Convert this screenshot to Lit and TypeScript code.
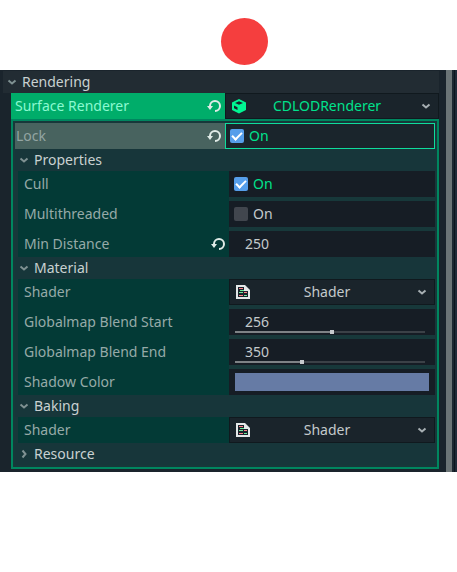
import { LitElement, html, css, svg, nothing, TemplateResult } from "lit";
import { customElement, state } from "lit/decorators.js";

const chevron = svg`<path d="M4.5 6.5 8 9.5l3.5-3" fill="none" stroke="currentColor" stroke-width="2"/>`;

const revertIcon = html`<svg viewBox="0 0 16 16" aria-hidden="true">
  <path fill="currentColor" d="M9 2a6 6 0 0 0-6 6H1l3 4 3-4H5a4 4 0 1 1 4 4v2A6 6 0 0 0 9 2z"/>
</svg>`;

const cubeIcon = html`<svg class="kind" viewBox="0 0 16 16" aria-hidden="true">
  <path fill="#00f693" d="M8 1 15 4.500v7.500L8 15.500 1 12V4.500z"/>
  <path fill="#18232b" d="M8 3.200 12 5 8 6.800 4 5zM3 7.500l3.500 1.700v2.800L3 10.300z"/>
</svg>`;

const shaderIcon = html`<svg class="kind" viewBox="0 0 16 16" aria-hidden="true">
  <path fill="#e4e8e9" d="M1 1h9l5 5v9H1z"/>
  <path fill="#18232b" d="M3 3h6v4h4v6H3z"/>
  <path stroke="#ff7f86" d="M4 4.500h4M9 8.500h3M4 11.500h4"/>
  <path stroke="#6fe89b" d="M5 6.500h4M4 8.500h4M9 11.500h3"/>
</svg>`;

@customElement("app-root")
export class AppRoot extends LitElement {
  static styles = css`
    :host {
      display: block;
      font: 14px/20px "Noto Sans", sans-serif;
      color: #c4cacc;
    }
    *, ::after { box-sizing: border-box; }
    .intro {
      display: flex;
      justify-content: center;
      align-items: flex-end;
      height: 70px;
      padding: 0 0 5px 32px;
      background: #fff;
    }
    .dot {
      width: 47px;
      height: 47px;
      border-radius: 50%;
      background: #f53e3e;
    }
    .inspector {
      display: flex;
      background: #1a242c;
    }
    .content {
      flex: 1;
      min-width: 0;
      padding: 1px 7px 3px 3px;
    }
    .scroll {
      width: 11px;
      border-left: 6px solid #6b7476;
      background: linear-gradient(90deg, #1d2831 2px, #0c151d 2px 3px, #202b38 3px);
    }
    .head {
      display: flex;
      align-items: center;
      width: 100%;
      height: 22px;
      margin: 0;
      padding: 0 3px 0 1px;
      border: 0;
      gap: 2px;
      background: #17363a;
      color: #c9d1d1;
      font: inherit;
      text-align: left;
    }
    .top { background: #222c33; }
    .head svg { width: 16px; height: 16px; color: #7f9192; }
    .head svg.closed { transform: rotate(-90deg); }
    .main { padding-left: 8px; }
    .row {
      display: grid;
      grid-template-columns: 1fr 1fr;
      height: 26px;
    }
    .name {
      display: flex;
      align-items: center;
      justify-content: space-between;
      min-width: 0;
      padding: 0 3px 0 1px;
      color: #96aaa8;
      white-space: nowrap;
    }
    .name button {
      display: flex;
      padding: 0;
      border: 0;
      background: none;
      color: #e0ebe7;
    }
    .name button svg { width: 16px; height: 16px; }
    .picked .name { padding-left: 4px; background: #00ad6a; color: #8bf9d0; }
    .hover .name { background: #48635f; color: #93a5a2; }
    .box {
      padding: 2px;
      border: 2px solid #00865f;
      background: #17383a;
    }
    .group {
      display: grid;
      gap: 4px;
      padding-left: 8px;
      background: linear-gradient(90deg, #17383a 3px, #033a36 3px calc(50% + 4px), #17383a 0);
    }
    .value {
      position: relative;
      display: flex;
      align-items: center;
      min-width: 0;
      background: #161d25;
    }
    .hover .value { border: 1px solid #0fdc9c; background: #1a252c; }
    .check {
      display: flex;
      align-items: center;
      gap: 5px;
      flex: 1;
      padding-left: 5px;
    }
    .hover .check { padding-left: 4px; }
    .check input {
      appearance: none;
      display: grid;
      width: 14px;
      height: 14px;
      margin: 0;
      border-radius: 2px;
      background: #41464e;
    }
    .check input:checked { background: #569eea; }
    .check input:checked::after {
      content: "";
      width: 10px;
      height: 6px;
      margin: 3px 0 0 2px;
      border: solid #fff;
      border-width: 0 0 2px 2px;
      transform: rotate(-45deg);
    }
    .check.on { color: #00e28c; }
    .drop { border: 1px solid #10191e; background: #1a242b; }
    .drop svg { position: absolute; width: 16px; height: 16px; top: 4px; pointer-events: none; }
    .drop .kind { left: 5px; }
    .drop .arrow { right: 4px; color: #a7afb3; }
    select {
      appearance: none;
      width: 100%;
      height: 24px;
      padding: 0 30px 0 20px;
      border: 0;
      background: none;
      color: inherit;
      font: inherit;
      text-align: center;
      text-align-last: center;
    }
    .picked .drop { color: #00e28c; }
    .num {
      width: 100%;
      height: 26px;
      padding: 0 16px 2px;
      border: 0;
      background: none;
      color: inherit;
      font: inherit;
    }
    .range {
      position: absolute;
      left: 6px;
      right: 10px;
      bottom: 1px;
      display: flex;
    }
    .range input {
      appearance: none;
      width: 100%;
      height: 4px;
      margin: 0;
      background: linear-gradient(90deg, #7d8286 var(--fill), #3b4147 0) center / 100% 2px no-repeat;
    }
    .range input::-webkit-slider-thumb {
      appearance: none;
      width: 4px;
      height: 4px;
      background: #c6cacd;
    }
    .color {
      appearance: none;
      width: 100%;
      height: 18px;
      margin: 0 6px;
      padding: 0;
      border: 0;
      background: none;
    }
    .color::-webkit-color-swatch-wrapper { padding: 0; }
    .color::-webkit-color-swatch { border: 0; border-radius: 0; }
    :focus { outline: none; }
  `;

  @state() private closed = new Set<string>(["Resource"]);
  @state() private flags: Record<string, boolean> = { lock: true, cull: true, threads: false };
  @state() private nums: Record<string, number> = { distance: 250, start: 256, end: 350 };

  private toggle(name: string) {
    const next = new Set(this.closed);
    if (!next.delete(name)) next.add(name);
    this.closed = next;
  }

  private head(name: string, cls = "") {
    const closed = this.closed.has(name);
    return html`<button class="head ${cls}" aria-expanded=${!closed} @click=${() => this.toggle(name)}>
      <svg class=${closed ? "closed" : ""} viewBox="0 0 16 16" aria-hidden="true">${chevron}</svg>${name}
    </button>`;
  }

  private section(name: string, rows: TemplateResult[]) {
    return html`${this.head(name)}${this.closed.has(name) ? nothing : html`<div class="group">${rows}</div>`}`;
  }

  private row(id: string, name: string, value: TemplateResult, cls = "", revert = false) {
    return html`<div class="row ${cls}">
      <div class="name">
        <label for=${id}>${name}</label>
        ${revert ? html`<button aria-label="Revert ${name}">${revertIcon}</button>` : nothing}
      </div>
      ${value}
    </div>`;
  }

  private check(id: string) {
    const on = this.flags[id];
    return html`<div class="value">
      <label class="check ${on ? "on" : ""}">
        <input id=${id} type="checkbox" .checked=${on}
          @change=${(e: Event) => (this.flags = { ...this.flags, [id]: (e.target as HTMLInputElement).checked })}>On
      </label>
    </div>`;
  }

  private drop(id: string, text: string, icon: TemplateResult) {
    return html`<div class="value drop">
      ${icon}
      <select id=${id}><option>${text}</option></select>
      <svg class="arrow" viewBox="0 0 16 16" aria-hidden="true">${chevron}</svg>
    </div>`;
  }

  private num(id: string, max = 0) {
    const v = this.nums[id];
    const set = (e: Event) =>
      (this.nums = { ...this.nums, [id]: Number((e.target as HTMLInputElement).value) || 0 });
    return html`<div class="value">
      <input class="num" id=${id} inputmode="numeric" .value=${String(v)} @change=${set}>
      ${max
        ? html`<div class="range"><input type="range" aria-label="${id} slider" min="0" max=${max}
            .value=${String(v)} style="--fill:${(v / max) * 100}%" @input=${set}></div>`
        : nothing}
    </div>`;
  }

  render() {
    return html`
      <div class="intro"><div class="dot"></div></div>
      <main class="inspector">
        <div class="content">
          ${this.head("Rendering", "top")}
          ${this.closed.has("Rendering") ? nothing : html`<div class="main">
            ${this.row("renderer", "Surface Renderer", this.drop("renderer", "CDLODRenderer", cubeIcon), "picked", true)}
            <div class="box">
              ${this.row("lock", "Lock", this.check("lock"), "hover", true)}
              ${this.section("Properties", [
                this.row("cull", "Cull", this.check("cull")),
                this.row("threads", "Multithreaded", this.check("threads")),
                this.row("distance", "Min Distance", this.num("distance"), "", true),
              ])}
              ${this.section("Material", [
                this.row("shader", "Shader", this.drop("shader", "Shader", shaderIcon)),
                this.row("start", "Globalmap Blend Start", this.num("start", 500)),
                this.row("end", "Globalmap Blend End", this.num("end", 1000)),
                this.row("shadow", "Shadow Color", html`<div class="value">
                  <input class="color" id="shadow" type="color" value="#667ba5"></div>`),
              ])}
              ${this.section("Baking", [
                this.row("baking", "Shader", this.drop("baking", "Shader", shaderIcon)),
              ])}
              ${this.section("Resource", [])}
            </div>
          </div>`}
        </div>
        <div class="scroll"></div>
      </main>
    `;
  }
}
